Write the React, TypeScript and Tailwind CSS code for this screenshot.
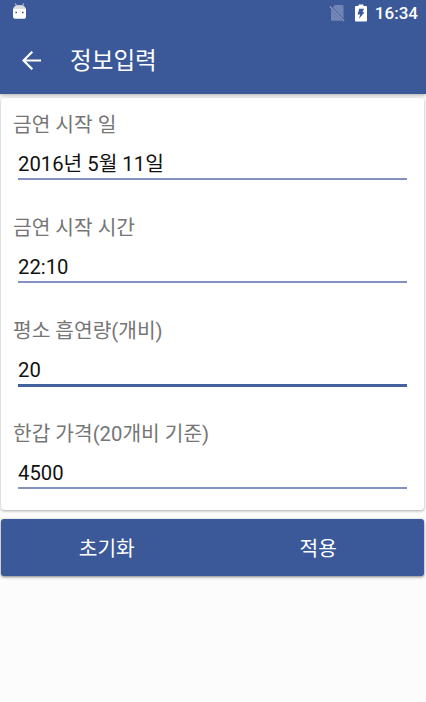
type FieldProps = {
  label: string
  value: string
  focused?: boolean
}

const fields: FieldProps[] = [
  { label: '금연 시작 일', value: '2016년 5월 11일' },
  { label: '금연 시작 시간', value: '22:10' },
  { label: '평소 흡연량(개비)', value: '20', focused: true },
  { label: '한갑 가격(20개비 기준)', value: '4500' },
]

function StatusBar() {
  return (
    <div className="flex h-[25px] items-center pl-3 pr-2 text-white">
      <svg width="15" height="17" viewBox="0 0 15 17" className="-mt-[3px]">
        <path d="M3.4 0.4 4.6 3.4M11.6 0.4 10.4 3.4" stroke="#b9c4dc" strokeWidth="1.1" />
        <path d="M1.3 5.8C1.7 3.4 3.8 2.1 7.5 2.1s5.8 1.3 6.2 3.7z" fill="#dcdcdc" />
        <path d="M1 5.4h13v7.8a2.6 2.6 0 0 1-2.6 2.6H3.6A2.6 2.6 0 0 1 1 13.2z" fill="#fff" />
        <path d="M3.4 9.4h1.6M10 9.4h1.6" stroke="#3b5998" strokeWidth="1.5" />
      </svg>
      <div className="ml-auto flex items-center">
        {/* no SIM */}
        <svg width="16" height="18" viewBox="0 0 16 18">
          <path d="M6 1h7.5a1 1 0 0 1 1 1v12.6L3.7 3.5z" fill="#7184b3" />
          <path d="M2 4.8 13.6 16.8H3a1 1 0 0 1-1-1z" fill="#7184b3" />
          <path d="M.8 2.4 15.2 17.2" stroke="#8f9dc3" strokeWidth="1.2" />
        </svg>
        {/* charging */}
        <svg width="12" height="18" viewBox="0 0 12 18" className="ml-2.5">
          <path d="M3.6 .4h4.8v1.6H11a1 1 0 0 1 1 1v13.6a1 1 0 0 1-1 1H1a1 1 0 0 1-1-1V3a1 1 0 0 1 1-1h2.6z" fill="#fff" />
          <path d="M4.2 4.8h4.8L7.5 8.2h2.1L4 14.8l1.2-4.4H2.6z" fill="#3b5998" />
        </svg>
        <span className="ml-2 pt-px text-[17px] font-medium leading-none">16:34</span>
      </div>
    </div>
  )
}

function Field({ label, value, focused }: FieldProps) {
  return (
    <div className="h-[103px] pl-3 pr-[17px]">
      <div className="h-[30px] text-[20.3px] leading-[32px] text-[#757575]">{label}</div>
      <div
        className={
          focused
            ? 'ml-[5px] mt-2 h-[34px] border-b-3 border-[#4562a0] text-[20.3px] leading-[34px] text-[#111]'
            : 'ml-[5px] mt-2 h-[33px] border-b-2 border-[#8490c0] text-[20.3px] leading-[34px] text-[#111]'
        }
      >
        {value}
      </div>
    </div>
  )
}

export default function App() {
  return (
    <div className="h-[702px] w-[426px] overflow-hidden bg-[#fcfcfc] font-[Roboto,'Noto_Sans_CJK_KR',sans-serif]">
      <header className="relative h-[94px] bg-[#3b5998] shadow-[0_1px_4px_rgba(0,0,0,0.35)]">
        <StatusBar />
        <div className="flex h-[69px] items-center pl-[22px] text-white">
          <svg width="20" height="20" viewBox="0 0 20 20" fill="none" stroke="#fff" strokeWidth="2.2">
            <path d="M19 10.5H2M10.3 1.7 1.5 10.5l8.8 8.8" />
          </svg>
          <h1 className="ml-7 pt-[5px] text-[23.6px] leading-none">정보입력</h1>
        </div>
      </header>

      <main className="px-px pt-1">
        <section className="mr-px h-[412px] rounded-[3px] bg-white pt-[11px] shadow-[0_1px_3px_rgba(0,0,0,0.32)]">
          {fields.map((field) => (
            <Field key={field.label} {...field} />
          ))}
        </section>

        <div className="mr-px mt-[9px] grid h-[57px] grid-cols-2 rounded-[3px] bg-[#3b5998] text-[20.3px] text-white shadow-[0_1px_3px_rgba(0,0,0,0.5)]">
          <button type="button" className="pt-[3px]">초기화</button>
          <button type="button" className="pt-[3px]">적용</button>
        </div>
      </main>
    </div>
  )
}
